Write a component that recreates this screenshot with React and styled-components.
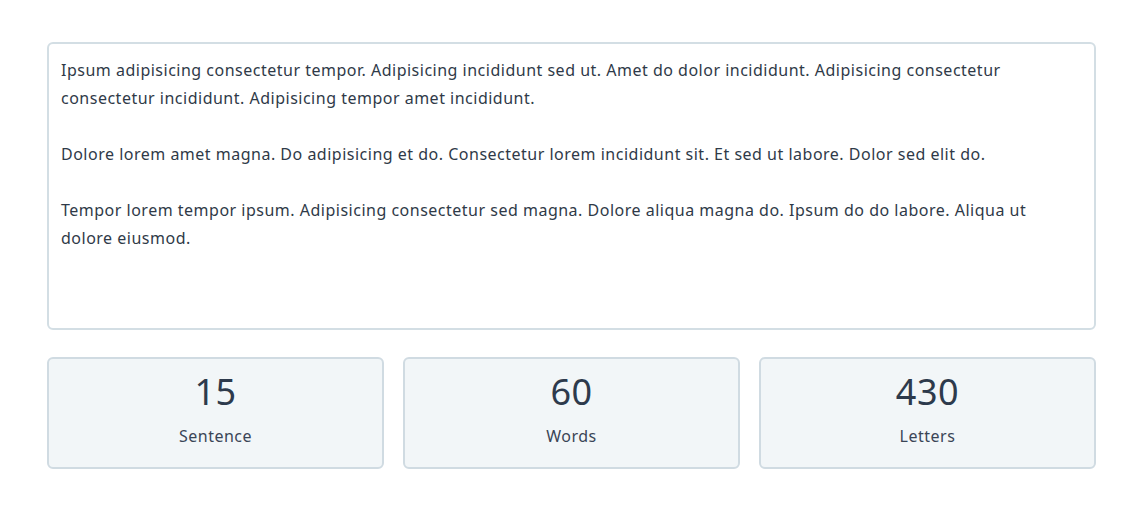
import React from "react";
import styled, { createGlobalStyle } from "styled-components";

const GlobalStyle = createGlobalStyle`
  * { box-sizing: border-box; }
  body {
    margin: 0;
    background: #ffffff;
    font-family: "Noto Sans", Lato, sans-serif;
    color: #2f3a48;
  }
`;

const text = `Ipsum adipisicing consectetur tempor. Adipisicing incididunt sed ut. Amet do dolor incididunt. Adipisicing consectetur consectetur incididunt. Adipisicing tempor amet incididunt.

Dolore lorem amet magna. Do adipisicing et do. Consectetur lorem incididunt sit. Et sed ut labore. Dolor sed elit do.

Tempor lorem tempor ipsum. Adipisicing consectetur sed magna. Dolore aliqua magna do. Ipsum do do labore. Aliqua ut dolore eiusmod.`;

const stats = [
  { value: 15, label: "Sentence" },
  { value: 60, label: "Words" },
  { value: 430, label: "Letters" },
];

function App() {
  return (
    <>
      <GlobalStyle />
      <Page>
        <Editor defaultValue={text} spellCheck={false} />
        <Stats>
          {stats.map((s) => (
            <StatCard key={s.label}>
              <Value>{s.value}</Value>
              <Label>{s.label}</Label>
            </StatCard>
          ))}
        </Stats>
      </Page>
    </>
  );
}

const Page = styled.div`
  width: 1049px;
  margin: 42px 0 0 47px;
  display: flex;
  flex-direction: column;
  gap: 27px;
`;

const Editor = styled.textarea`
  display: block;
  width: 100%;
  height: 288px;
  padding: 12px 30px 12px 12px;
  border: 2px solid #d3dee4;
  border-radius: 6px;
  font-family: "Noto Sans", Lato, sans-serif;
  font-size: 16px;
  letter-spacing: 0.5px;
  line-height: 28px;
  color: #2f3a48;
  resize: none;
  outline: none;
`;

const Stats = styled.div`
  display: grid;
  grid-template-columns: repeat(3, 1fr);
  gap: 19px;
`;

const StatCard = styled.div`
  height: 112px;
  display: flex;
  flex-direction: column;
  align-items: center;
  padding-top: 11px;
  background: #f2f6f8;
  border: 2px solid #d0dbe2;
  border-radius: 6px;
`;

const Value = styled.div`
  font-size: 36px;
  line-height: 44px;
  letter-spacing: 0.5px;
  color: #2d3a4c;
`;

const Label = styled.div`
  margin-top: 12px;
  font-size: 16px;
  line-height: 20px;
  letter-spacing: 0.5px;
  color: #3a4556;
`;

export default App;
